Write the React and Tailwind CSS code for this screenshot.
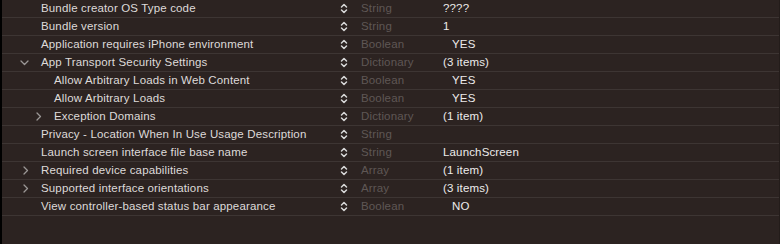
import React from "react";

const ROWS = [
  { key: "Bundle creator OS Type code", type: "String", value: "????" },
  { key: "Bundle version", type: "String", value: "1" },
  { key: "Application requires iPhone environment", type: "Boolean", value: "YES", bool: true },
  { key: "App Transport Security Settings", type: "Dictionary", value: "(3 items)", disclosure: "open" },
  { key: "Allow Arbitrary Loads in Web Content", type: "Boolean", value: "YES", bool: true, level: 1 },
  { key: "Allow Arbitrary Loads", type: "Boolean", value: "YES", bool: true, level: 1 },
  { key: "Exception Domains", type: "Dictionary", value: "(1 item)", disclosure: "closed", level: 1 },
  { key: "Privacy - Location When In Use Usage Description", type: "String", value: "" },
  { key: "Launch screen interface file base name", type: "String", value: "LaunchScreen" },
  { key: "Required device capabilities", type: "Array", value: "(1 item)", disclosure: "closed" },
  { key: "Supported interface orientations", type: "Array", value: "(3 items)", disclosure: "closed" },
  { key: "View controller-based status bar appearance", type: "Boolean", value: "NO", bool: true },
];

const Stepper = () => (
  <svg width="8" height="11" viewBox="0 0 8 11" fill="none" stroke="#d8d8d8" strokeWidth="1.5" strokeLinecap="round" strokeLinejoin="round">
    <path d="M1.5 4 L4 1.5 L6.5 4" />
    <path d="M1.5 7 L4 9.5 L6.5 7" />
  </svg>
);

const Disclosure = ({ open }) =>
  open ? (
    <svg width="9" height="6" viewBox="0 0 9 6" fill="none" stroke="#9b9796" strokeWidth="1.3" strokeLinecap="round" strokeLinejoin="round">
      <path d="M1 1 L4.5 4.5 L8 1" />
    </svg>
  ) : (
    <svg width="6" height="9" viewBox="0 0 6 9" fill="none" stroke="#9b9796" strokeWidth="1.3" strokeLinecap="round" strokeLinejoin="round">
      <path d="M1 1 L4.5 4.5 L1 8" />
    </svg>
  );

export default function App() {
  return (
    <div
      className="w-[780px] h-[244px] bg-[#2c2321] border-l-2 border-l-black border-r border-r-[#231c1a] overflow-hidden text-[11.5px] tracking-[0.15px] leading-none"
      style={{ fontFamily: '"Liberation Sans", Arial, sans-serif' }}
    >
      {ROWS.map((r, i) => (
        <div key={i} className="flex items-center h-[18px] border-b border-[#3d3533]">
          <div className="w-[334px] flex items-center h-full overflow-hidden whitespace-nowrap">
            <div className={`${r.level ? "w-[52px]" : "w-[39px]"} flex-shrink-0 flex justify-end pr-[6px]`}>
              {r.disclosure === "open" && (
                <span className="mr-[6px]">
                  <Disclosure open />
                </span>
              )}
              {r.disclosure === "closed" && (
                <span className="mr-[6px]">
                  <Disclosure />
                </span>
              )}
            </div>
            <span className="text-[#dedad9]">{r.key}</span>
          </div>
          <div className="w-[25px] flex items-center pl-[4px]">
            <Stepper />
          </div>
          <div className="w-[82px] text-[#5f5755]">{r.type}</div>
          <div className={`text-[#ecebeb] ${r.bool ? "pl-[9px]" : ""}`}>{r.value}</div>
        </div>
      ))}
    </div>
  );
}
